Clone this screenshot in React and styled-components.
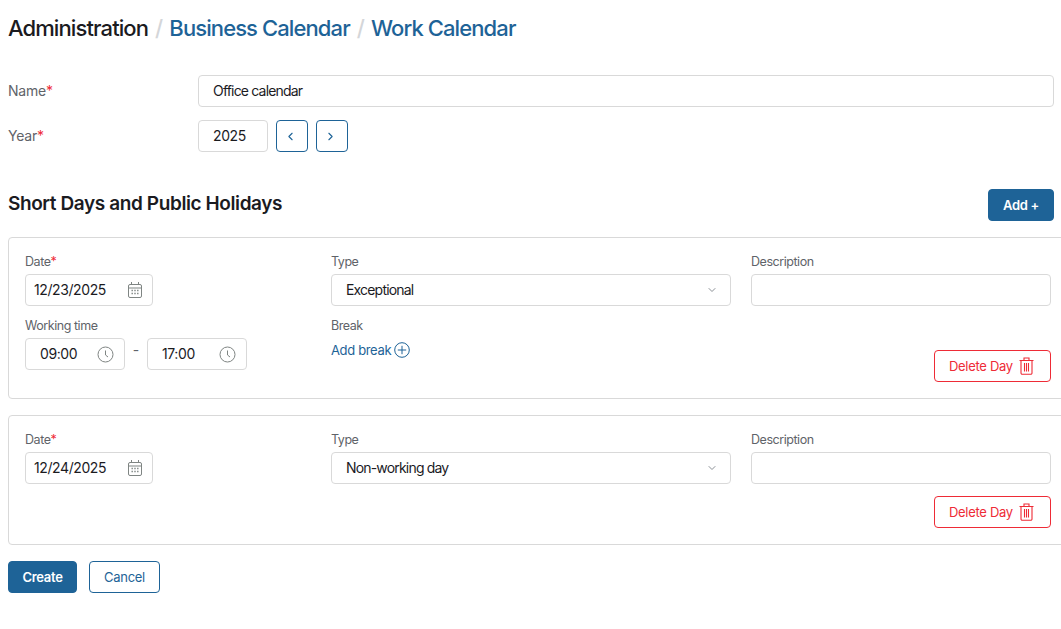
import React from 'react';
import styled, { createGlobalStyle } from 'styled-components';
import { ChevronLeft, ChevronRight, ChevronDown } from 'lucide-react';

const primary = '#1e6397';
const border = '#d9d9d9';
const red = '#ee2b36';

const GlobalStyle = createGlobalStyle`
  html, body {
    margin: 0;
    padding: 0;
    height: 100%;
    background: #fff;
    overflow: hidden;
  }
  body {
    font-family: Inter, "Liberation Sans", sans-serif;
    color: #1b1b1f;
  }
`;

const Page = styled.div`
  width: 1046px;
  padding: 15px 0 0 8px;
`;

const Breadcrumbs = styled.div`
  display: flex;
  align-items: center;
  height: 26px;
  font-size: 22px;
  font-weight: 500;
  letter-spacing: -0.9px;
  line-height: 26px;
`;

const Crumb = styled.span`
  color: ${p => (p.$link ? primary : '#1b1b1f')};
`;

const Slash = styled.span`
  color: #d4d6d9;
  margin: 0 7px;
`;

const FormRow = styled.div`
  display: flex;
  align-items: center;
  margin-top: ${p => p.$top || 13}px;
`;

const RowLabel = styled.div`
  width: 190px;
  flex: none;
  padding-bottom: 2px;
  font-size: 14px;
  letter-spacing: -0.2px;
  color: #5f6369;
`;

const Required = styled.span`
  color: #ee2b36;
`;

const Box = styled.div`
  box-sizing: border-box;
  display: flex;
  align-items: center;
  height: 32px;
  width: ${p => (p.$width ? `${p.$width}px` : 'auto')};
  flex: ${p => (p.$width ? 'none' : 1)};
  padding: 0 ${p => p.$right || 14}px 0 ${p => p.$left || 14}px;
  border: 1px solid ${border};
  border-radius: 4px;
  background: #fff;
  font-size: 14px;
  color: #1b1b1f;
  white-space: nowrap;
`;

const BoxText = styled.span`
  flex: 1;
  padding-bottom: 2px;
  letter-spacing: ${p => (p.$number ? '-0.4px' : '-0.82px')};
`;

const IconButton = styled.button`
  display: flex;
  align-items: center;
  justify-content: center;
  width: 32px;
  height: 32px;
  margin-left: 8px;
  padding: 0 3px 0 0;
  border: 1px solid ${primary};
  border-radius: 4px;
  background: #fff;
  color: ${primary};
`;

const SectionHead = styled.div`
  display: flex;
  align-items: center;
  justify-content: space-between;
  margin-top: 37px;
`;

const SectionTitle = styled.h2`
  margin: 0 0 4px;
  font-size: 19px;
  font-weight: 600;
  letter-spacing: -0.4px;
  color: #1b1b1f;
`;

const Button = styled.button`
  display: inline-flex;
  align-items: center;
  justify-content: center;
  box-sizing: border-box;
  height: 32px;
  width: ${p => p.$width}px;
  padding: 0 0 1px;
  border: 1px solid ${primary};
  border-radius: 4px;
  background: ${p => (p.$solid ? primary : '#fff')};
  color: ${p => (p.$solid ? '#fff' : primary)};
  font-family: inherit;
  font-size: 13px;
  font-weight: ${p => (p.$solid ? 600 : 400)};
  letter-spacing: -0.3px;
`;

const Card = styled.section`
  box-sizing: border-box;
  display: grid;
  grid-template-columns: 286px 400px 300px;
  column-gap: 20px;
  row-gap: 12px;
  width: 1059px;
  margin-top: 16px;
  padding: 16px 16px 16px;
  border: 1px solid ${border};
  border-radius: 4px;
`;

const Field = styled.div`
  display: flex;
  flex-direction: column;
`;

const FieldLabel = styled.div`
  height: 16px;
  margin-bottom: 4px;
  font-size: 12.5px;
  letter-spacing: -0.45px;
  line-height: 16px;
  color: #5f6369;
`;

const Times = styled.div`
  display: flex;
  align-items: center;
`;

const Dash = styled.span`
  width: 22px;
  margin-top: -10px;
  text-align: center;
  font-size: 14px;
  color: #5f6369;
`;

const AddBreak = styled.div`
  display: flex;
  align-items: center;
  gap: 3px;
  height: 24px;
  font-size: 13px;
  letter-spacing: -0.35px;
  color: ${primary};
`;

const Caret = styled(ChevronDown)`
  color: #8b9096;
`;

const DeleteCell = styled.div`
  grid-column: 3;
  display: flex;
  justify-content: flex-end;
  margin-top: ${p => p.$offset || 0}px;
`;

const DeleteButton = styled.button`
  display: flex;
  align-items: center;
  justify-content: space-between;
  box-sizing: border-box;
  width: 117px;
  height: 32px;
  padding: 0 16px 0 14px;
  border: 1px solid ${red};
  border-radius: 4px;
  background: #fff;
  color: ${red};
  font-family: inherit;
  font-size: 13px;
  letter-spacing: -0.3px;
`;

const Footer = styled.div`
  display: flex;
  gap: 12px;
  margin-top: 16px;
`;

const CalendarIcon = () => (
  <svg width="16" height="18" viewBox="0 0 16 18" fill="none" stroke="#7f8583" strokeWidth="1">
    <rect x="1.5" y="3.5" width="13" height="13" rx="1.5" />
    <path d="M1.5 7h13M4.5 1v3M11.5 1v3" />
    <path d="M4.5 9.5h1.4M7.3 9.5h1.4M10.1 9.5h1.4M4.5 12.5h1.4M7.3 12.5h1.4M10.1 12.5h1.4" strokeWidth="1.5" />
  </svg>
);

const ClockIcon = () => (
  <svg width="17" height="17" viewBox="0 0 17 17" fill="none" stroke="#7f8583" strokeWidth="1">
    <circle cx="8.5" cy="8.5" r="7.5" />
    <path d="M8.5 4.5v4.5l2.5 2" />
  </svg>
);

const PlusCircleIcon = () => (
  <svg width="16" height="16" viewBox="0 0 16 16" fill="none" stroke={primary} strokeWidth="1">
    <circle cx="8" cy="8" r="7.3" />
    <path d="M8 3.8v8.4M3.8 8h8.4" />
  </svg>
);

const TrashIcon = () => (
  <svg width="15" height="18" viewBox="0 0 15 18" fill="none" stroke={red} strokeWidth="1.1">
    <path d="M.5 3.5h14M5 3.5V1h5v2.5M2 3.5V16a1.2 1.2 0 0 0 1.2 1.2h8.6A1.2 1.2 0 0 0 13 16V3.5" />
    <path d="M5.5 6v8.5M7.5 6v8.5M9.5 6v8.5" />
  </svg>
);

const Star = () => <Required>*</Required>;

const DateField = ({ value }) => (
  <Field>
    <FieldLabel>Date<Star /></FieldLabel>
    <Box $width={128} $left={8} $right={9}>
      <BoxText $number>{value}</BoxText>
      <CalendarIcon />
    </Box>
  </Field>
);

const TimeBox = ({ value }) => (
  <Box $width={100} $left={14} $right={10}>
    <BoxText $number>{value}</BoxText>
    <ClockIcon />
  </Box>
);

const TypeField = ({ value }) => (
  <Field>
    <FieldLabel>Type</FieldLabel>
    <Box $right={12}>
      <BoxText>{value}</BoxText>
      <Caret size={12} />
    </Box>
  </Field>
);

const DescriptionField = () => (
  <Field>
    <FieldLabel>Description</FieldLabel>
    <Box />
  </Field>
);

const DeleteDay = ({ offset }) => (
  <DeleteCell $offset={offset}>
    <DeleteButton>Delete Day <TrashIcon /></DeleteButton>
  </DeleteCell>
);

export default function App() {
  return (
    <Page>
      <GlobalStyle />
      <Breadcrumbs>
        <Crumb>Administration</Crumb>
        <Slash>/</Slash>
        <Crumb $link>Business Calendar</Crumb>
        <Slash>/</Slash>
        <Crumb $link>Work Calendar</Crumb>
      </Breadcrumbs>

      <FormRow $top={34}>
        <RowLabel>Name<Star /></RowLabel>
        <Box><BoxText>Office calendar</BoxText></Box>
      </FormRow>
      <FormRow>
        <RowLabel>Year<Star /></RowLabel>
        <Box $width={70}><BoxText $number>2025</BoxText></Box>
        <IconButton><ChevronLeft size={13} strokeWidth={2} /></IconButton>
        <IconButton><ChevronRight size={13} strokeWidth={2} /></IconButton>
      </FormRow>

      <SectionHead>
        <SectionTitle>Short Days and Public Holidays</SectionTitle>
        <Button $solid $width={66}>Add +</Button>
      </SectionHead>

      <Card>
        <DateField value="12/23/2025" />
        <TypeField value="Exceptional" />
        <DescriptionField />
        <Field>
          <FieldLabel>Working time</FieldLabel>
          <Times>
            <TimeBox value="09:00" />
            <Dash>-</Dash>
            <TimeBox value="17:00" />
          </Times>
        </Field>
        <Field>
          <FieldLabel>Break</FieldLabel>
          <AddBreak>Add break <PlusCircleIcon /></AddBreak>
        </Field>
        <DeleteDay offset={32} />
      </Card>

      <Card>
        <DateField value="12/24/2025" />
        <TypeField value="Non-working day" />
        <DescriptionField />
        <DeleteDay />
      </Card>

      <Footer>
        <Button $solid $width={69}>Create</Button>
        <Button $width={71}>Cancel</Button>
      </Footer>
    </Page>
  );
}
